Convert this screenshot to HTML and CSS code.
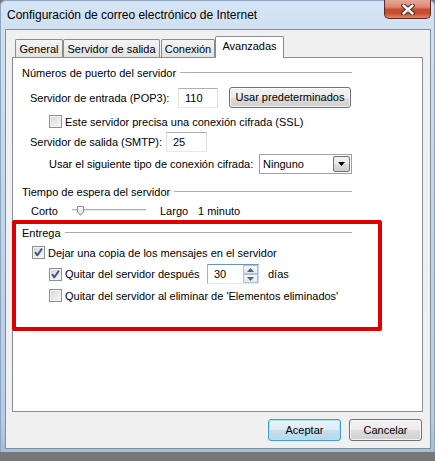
FILE: index.html
```html
<!DOCTYPE html>
<html lang="es">
<head>
<meta charset="utf-8">
<title>Configuración de correo electrónico de Internet</title>
<link rel="stylesheet" href="styles.css">
</head>
<body>
<div class="window">
  <div class="titlebar">
    <span class="title">Configuración de correo electrónico de Internet</span>
    <div class="close">
      <svg width="14" height="11" viewBox="0 0 14 11"><path d="M2.5 1.5 L11.5 9.5 M11.5 1.5 L2.5 9.5" stroke="#4a2620" stroke-width="4.4" stroke-linecap="round" fill="none"/><path d="M2.5 1.5 L11.5 9.5 M11.5 1.5 L2.5 9.5" stroke="#fff" stroke-width="2.4" stroke-linecap="round" fill="none"/></svg>
    </div>
  </div>
  <div class="client">
    <div class="tabs">
      <div class="tab t-general">General</div>
      <div class="tab t-salida">Servidor de salida</div>
      <div class="tab t-conexion">Conexión</div>
      <div class="tab active">Avanzadas</div>
    </div>
    <div class="panel">
      <div class="group">
        <div class="legend">Números de puerto del servidor</div>
        <div class="row r-pop">
          <span class="lbl-pop">Servidor de entrada (POP3):</span>
          <div class="input in-pop">110</div>
          <div class="btn btn-def">Usar predeterminados</div>
        </div>
        <div class="row r-ssl">
          <span class="cb"></span>
          <span class="cb-label">Este servidor precisa una conexión cifrada (SSL)</span>
        </div>
        <div class="row r-smtp">
          <span class="lbl-smtp">Servidor de salida (SMTP):</span>
          <div class="input in-smtp">25</div>
        </div>
        <div class="row r-enc">
          <span class="lbl-enc">Usar el siguiente tipo de conexión cifrada:</span>
          <div class="select">
            <span>Ninguno</span>
            <span class="drop"><svg width="7" height="4" viewBox="0 0 7 4"><path d="M0 0 H7 L3.5 4 Z" fill="#000"/></svg></span>
          </div>
        </div>

        <div class="legend lg-time">Tiempo de espera del servidor</div>
        <div class="row r-slider">
          <span class="lbl-corto">Corto</span>
          <div class="track">
            <svg class="thumb" width="7" height="10" viewBox="0 0 7 10"><defs><linearGradient id="tg" x1="0" y1="0" x2="0" y2="1"><stop offset="0" stop-color="#fbfbfb"/><stop offset="1" stop-color="#d9d9d9"/></linearGradient></defs><path d="M0.5 0.5 H6.5 V6 L3.5 9.3 L0.5 6 Z" fill="url(#tg)" stroke="#8c8c8c"/></svg>
          </div>
          <span class="lbl-largo">Largo</span>
          <span>1 minuto</span>
        </div>

        <div class="legend lg-entrega">Entrega</div>
        <div class="row r-cb1">
          <span class="cb checked"><svg width="11" height="11" viewBox="0 0 11 11"><path d="M2 5.2 L4.4 8.3 L9 1.6" stroke="#3f5685" stroke-width="1.9" fill="none" stroke-linejoin="round"/></svg></span>
          <span class="cb-label">Dejar una copia de los mensajes en el servidor</span>
        </div>
        <div class="row r-cb2">
          <span class="cb checked"><svg width="11" height="11" viewBox="0 0 11 11"><path d="M2 5.2 L4.4 8.3 L9 1.6" stroke="#3f5685" stroke-width="1.9" fill="none" stroke-linejoin="round"/></svg></span>
          <span class="cb-label lbl-despues">Quitar del servidor después</span>
          <div class="spin">
            <span class="spin-val">30</span>
            <span class="spin-btns">
              <span class="sb"><svg width="7" height="4" viewBox="0 0 7 4"><path d="M0 4 H7 L3.5 0 Z" fill="#4d6380"/></svg></span>
              <span class="sb"><svg width="7" height="4" viewBox="0 0 7 4"><path d="M0 0 H7 L3.5 4 Z" fill="#4d6380"/></svg></span>
            </span>
          </div>
          <span class="lbl-dias">días</span>
        </div>
        <div class="row r-cb3">
          <span class="cb"></span>
          <span class="cb-label">Quitar del servidor al eliminar de 'Elementos eliminados'</span>
        </div>
      </div>
      <div class="highlight"></div>
    </div>
    <div class="actions">
      <div class="btn btn-ok">Aceptar</div>
      <div class="btn btn-cancel">Cancelar</div>
    </div>
  </div>
</div>
</body>
</html>
```
FILE: styles.css
```css
html, body {
  margin: 0;
  padding: 0;
}
body {
  background: #777;
  font-family: "Liberation Sans", Arial, sans-serif;
  font-size: 11px;
  color: #000;
  width: 435px;
  height: 461px;
  overflow: hidden;
}
.window {
  width: 435px;
  height: 452px;
  box-sizing: border-box;
  padding: 0 4px 0 5px;
  background: linear-gradient(180deg, #d6e5f5 0, #cfe0f2 30px, #bfd5ec 220px, #b4cde8 420px, #9fbfe0 100%);
  border-radius: 6px 6px 0 0;
  box-shadow: inset 1px 0 0 #8ea5c0, inset -1px 0 0 #8ea5c0, inset 0 1px 0 #8ea5c0;
  display: flex;
  flex-direction: column;
}
.titlebar {
  height: 29px;
  display: flex;
  justify-content: space-between;
  align-items: flex-start;
  flex: none;
}
.title {
  padding-left: 2px;
  line-height: 30px;
  font-size: 12px;
  color: #000;
  white-space: nowrap;
}
.close {
  width: 47px;
  height: 19px;
  box-sizing: border-box;
  border: 1px solid #5a2a24;
  border-top: none;
  border-radius: 0 0 5px 5px;
  background: linear-gradient(180deg, #e9a898 0, #db8470 40%, #c44a32 52%, #c8502f 75%, #e2866a 100%);
  display: flex;
  align-items: center;
  justify-content: center;
}
.client {
  flex: 1;
  margin-bottom: 3px;
  background: #f0f0f0;
  border: 1px solid #838e9b;
  padding: 6px 7px 7px 6px;
  display: flex;
  flex-direction: column;
}
.tabs {
  display: flex;
  align-items: flex-end;
  height: 21px;
  padding-left: 3px;
  position: relative;
  z-index: 2;
  flex: none;
}
.tab {
  height: 18px;
  box-sizing: border-box;
  border: 1px solid #898c95;
  border-bottom: none;
  border-radius: 2px 2px 0 0;
  background: linear-gradient(180deg, #f4f4f4 0, #ececec 50%, #e2e2e2 100%);
  text-align: center;
  line-height: 18px;
  white-space: nowrap;
  flex: none;
}
.t-general { width: 48px; }
.t-salida { width: 97px; }
.t-conexion { width: 54px; margin-left: 1px; }
.tab.active {
  width: 69px;
  height: 22px;
  margin-bottom: -1px;
  background: #fff;
  line-height: 18px;
}
.panel {
  height: 355px;
  box-sizing: border-box;
  border: 1px solid #898c95;
  background: #fff;
  position: relative;
  padding: 7px 0 0 9px;
  flex: none;
}
.group {
  width: 330px;
}
.legend {
  display: flex;
  align-items: center;
  height: 15px;
  white-space: nowrap;
}
.legend::after {
  content: "";
  flex: 1;
  height: 1px;
  background: #a7b0b8;
  margin-left: 4px;
}
.lg-time { margin-top: 10px; }
.lg-entrega { margin-top: 7px; }
.row {
  display: flex;
  align-items: center;
  white-space: nowrap;
}
.row > * { flex: none; }
.r-pop { margin-top: 7px; height: 21px; padding-left: 8px; }
.r-ssl { margin-top: 7px; height: 13px; padding-left: 27px; }
.r-smtp { margin-top: 4px; height: 20px; padding-left: 8px; }
.r-enc { margin-top: 2px; height: 20px; padding-left: 27px; }
.r-slider { margin-top: 4px; height: 15px; padding-left: 9px; }
.r-cb1 { margin-top: 6px; height: 13px; padding-left: 10px; }
.r-cb2 { margin-top: 5px; height: 20px; padding-left: 27px; }
.r-cb3 { margin-top: 5px; height: 13px; padding-left: 27px; }

.lbl-pop { width: 148px; }
.lbl-smtp { width: 136px; }
.lbl-enc { width: 210px; }
.lbl-corto { width: 41px; }
.lbl-largo { margin-left: 14px; width: 38px; }
.lbl-despues { width: 142px; }
.lbl-dias { margin-left: 9px; }

.input {
  height: 20px;
  box-sizing: border-box;
  border: 1px solid;
  border-color: #abadb3 #dbdfe6 #e3e9ef #e2e3ea;
  background: #fff;
  padding-left: 6px;
  line-height: 18px;
}
.in-pop { width: 40px; }
.in-smtp { width: 41px; }

.btn {
  height: 21px;
  box-sizing: border-box;
  border: 1px solid #707070;
  border-radius: 3px;
  background: linear-gradient(180deg, #f2f2f2 0, #ebebeb 50%, #dddddd 51%, #cfcfcf 100%);
  box-shadow: inset 0 0 0 1px rgba(255,255,255,0.75);
  text-align: center;
  line-height: 19px;
  white-space: nowrap;
}
.btn-def {
  width: 122px;
  margin-left: 11px;
}
.actions {
  display: flex;
  justify-content: flex-end;
  gap: 8px;
  margin-top: 7px;
  padding-right: 1px;
}
.btn-ok, .btn-cancel {
  width: 73px;
  height: 22px;
  line-height: 20px;
}
.btn-ok {
  border-color: #3c9fd6;
  background: linear-gradient(180deg, #eaf4fa 0, #dcecf5 50%, #c5dfee 51%, #b9d6e8 100%);
  box-shadow: inset 0 0 0 1px #a9e3fb;
}
.cb {
  width: 13px;
  height: 13px;
  box-sizing: border-box;
  border: 1px solid #8e8f8f;
  background: linear-gradient(135deg, #d2d2d2 0, #e8e8e8 50%, #f6f6f6 100%);
  box-shadow: inset 0 0 0 1px #f4f4f4;
  display: flex;
  align-items: center;
  justify-content: center;
}
.cb-label { margin-left: 3px; }
.select {
  width: 93px;
  height: 20px;
  box-sizing: border-box;
  border: 1px solid #a0a0a0;
  background: #fff;
  display: flex;
  align-items: center;
  justify-content: space-between;
  padding: 0 1px 0 3px;
}
.drop {
  width: 17px;
  height: 16px;
  box-sizing: border-box;
  border: 1px solid #707070;
  border-radius: 2px;
  background: linear-gradient(180deg, #f2f2f2 0, #ebebeb 50%, #dddddd 51%, #cfcfcf 100%);
  display: flex;
  align-items: center;
  justify-content: center;
}
.track {
  width: 74px;
  height: 15px;
  display: flex;
  align-items: center;
  background: linear-gradient(180deg, transparent 6px, #b5b5b5 6px, #b5b5b5 7px, #e6e6e6 7px, #e6e6e6 8px, transparent 8px);
}
.thumb { margin-left: 5px; }
.spin {
  width: 52px;
  height: 20px;
  box-sizing: border-box;
  border: 1px solid;
  border-color: #6a95c0 #c6d6e6 #e3e9ef #9ab6d4;
  background: #fff;
  display: flex;
  justify-content: space-between;
}
.spin-val { padding-left: 6px; line-height: 19px; }
.spin-btns {
  width: 15px;
  display: flex;
  flex-direction: column;
}
.sb {
  flex: 1;
  box-sizing: border-box;
  border: 1px solid #b4c1cf;
  background: linear-gradient(180deg, #f6f8fa, #e1e7ee);
  display: flex;
  align-items: center;
  justify-content: center;
}
.highlight {
  position: absolute;
  left: -1px;
  top: 162px;
  width: 370px;
  height: 111px;
  box-sizing: border-box;
  border: 4px solid #de0000;
  border-radius: 2px;
  pointer-events: none;
}
```
